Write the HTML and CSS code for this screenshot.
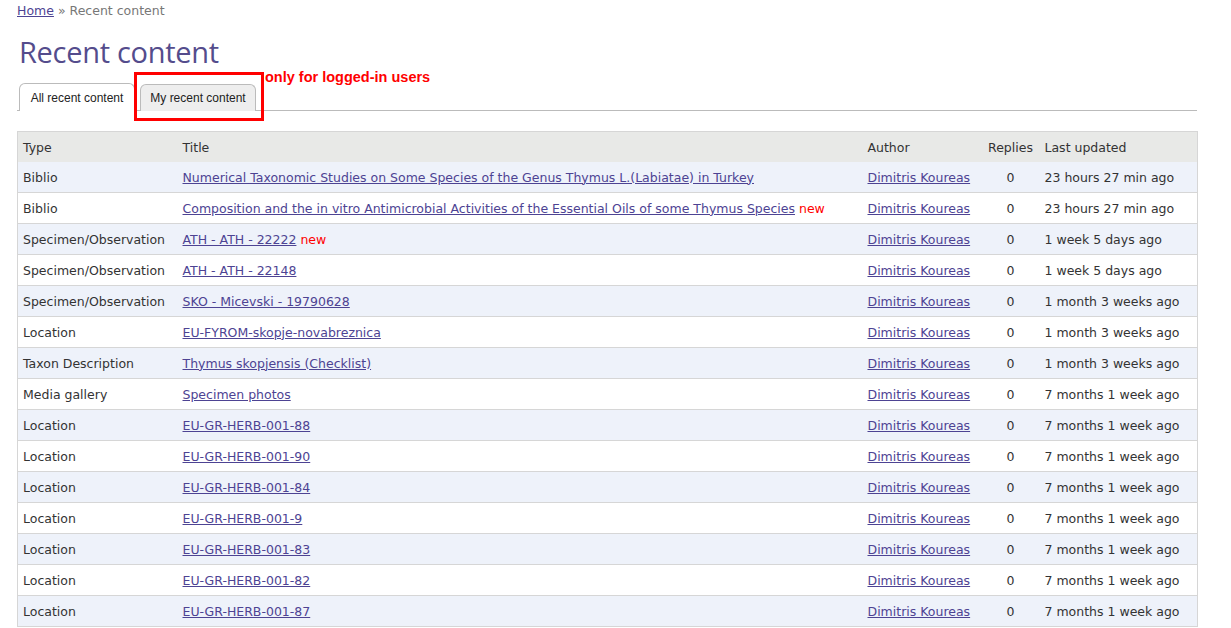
FILE: index.html
```html
<!DOCTYPE html>
<html>
<head>
<meta charset="utf-8">
<link rel="stylesheet" href="styles.css">
</head>
<body>
<div class="page">
  <div class="breadcrumb"><a href="#">Home</a> » Recent content</div>
  <h1 class="title">Recent content</h1>
  <div class="tabs-wrap">
    <ul class="tabs">
      <li class="tab active"><a href="#">All recent content</a></li>
      <li class="tab"><a href="#">My recent content</a></li>
    </ul>
    <div class="highlight"></div>
    <div class="note">only for logged-in users</div>
  </div>
  <table class="content">
    <colgroup>
      <col class="c-type"><col class="c-title"><col class="c-author"><col class="c-replies"><col class="c-updated">
    </colgroup>
    <thead>
      <tr><th>Type</th><th>Title</th><th>Author</th><th class="rep">Replies</th><th>Last updated</th></tr>
    </thead>
    <tbody>
      <tr class="odd"><td>Biblio</td><td><a href="#">Numerical Taxonomic Studies on Some Species of the Genus Thymus L.(Labiatae) in Turkey</a></td><td><a href="#">Dimitris Koureas</a></td><td class="rep">0</td><td>23 hours 27 min ago</td></tr>
      <tr><td>Biblio</td><td><a href="#">Composition and the in vitro Antimicrobial Activities of the Essential Oils of some Thymus Species</a> <span class="new">new</span></td><td><a href="#">Dimitris Koureas</a></td><td class="rep">0</td><td>23 hours 27 min ago</td></tr>
      <tr class="odd"><td>Specimen/Observation</td><td><a href="#">ATH - ATH - 22222</a> <span class="new">new</span></td><td><a href="#">Dimitris Koureas</a></td><td class="rep">0</td><td>1 week 5 days ago</td></tr>
      <tr><td>Specimen/Observation</td><td><a href="#">ATH - ATH - 22148</a></td><td><a href="#">Dimitris Koureas</a></td><td class="rep">0</td><td>1 week 5 days ago</td></tr>
      <tr class="odd"><td>Specimen/Observation</td><td><a href="#">SKO - Micevski - 19790628</a></td><td><a href="#">Dimitris Koureas</a></td><td class="rep">0</td><td>1 month 3 weeks ago</td></tr>
      <tr><td>Location</td><td><a href="#">EU-FYROM-skopje-novabreznica</a></td><td><a href="#">Dimitris Koureas</a></td><td class="rep">0</td><td>1 month 3 weeks ago</td></tr>
      <tr class="odd"><td>Taxon Description</td><td><a href="#">Thymus skopjensis (Checklist)</a></td><td><a href="#">Dimitris Koureas</a></td><td class="rep">0</td><td>1 month 3 weeks ago</td></tr>
      <tr><td>Media gallery</td><td><a href="#">Specimen photos</a></td><td><a href="#">Dimitris Koureas</a></td><td class="rep">0</td><td>7 months 1 week ago</td></tr>
      <tr class="odd"><td>Location</td><td><a href="#">EU-GR-HERB-001-88</a></td><td><a href="#">Dimitris Koureas</a></td><td class="rep">0</td><td>7 months 1 week ago</td></tr>
      <tr><td>Location</td><td><a href="#">EU-GR-HERB-001-90</a></td><td><a href="#">Dimitris Koureas</a></td><td class="rep">0</td><td>7 months 1 week ago</td></tr>
      <tr class="odd"><td>Location</td><td><a href="#">EU-GR-HERB-001-84</a></td><td><a href="#">Dimitris Koureas</a></td><td class="rep">0</td><td>7 months 1 week ago</td></tr>
      <tr><td>Location</td><td><a href="#">EU-GR-HERB-001-9</a></td><td><a href="#">Dimitris Koureas</a></td><td class="rep">0</td><td>7 months 1 week ago</td></tr>
      <tr class="odd"><td>Location</td><td><a href="#">EU-GR-HERB-001-83</a></td><td><a href="#">Dimitris Koureas</a></td><td class="rep">0</td><td>7 months 1 week ago</td></tr>
      <tr><td>Location</td><td><a href="#">EU-GR-HERB-001-82</a></td><td><a href="#">Dimitris Koureas</a></td><td class="rep">0</td><td>7 months 1 week ago</td></tr>
      <tr class="odd"><td>Location</td><td><a href="#">EU-GR-HERB-001-87</a></td><td><a href="#">Dimitris Koureas</a></td><td class="rep">0</td><td>7 months 1 week ago</td></tr>
    </tbody>
  </table>
</div>
</body>
</html>
```

FILE: styles.css
```css
html, body {
  margin: 0;
  padding: 0;
  background: #fff;
}
body {
  font-family: "DejaVu Sans", Verdana, sans-serif;
  font-size: 12.5px;
  color: #333;
}
a {
  color: #4d4393;
}
.page {
  padding: 3px 34px 0 17px;
}
.breadcrumb {
  color: #777;
  font-size: 12.5px;
  line-height: 16px;
}
.title {
  margin: 15px 0 0 2px;
  font-family: "Open Sans", sans-serif;
  font-weight: 400;
  font-size: 29px;
  line-height: 36px;
  color: #544c8c;
  letter-spacing: -0.3px;
}
.tabs-wrap {
  position: relative;
  margin-top: 13px;
  border-bottom: 1px solid #bbb;
  height: 27px;
}
.tabs {
  list-style: none;
  margin: 0;
  padding: 0 0 0 2px;
  display: flex;
  gap: 5px;
  height: 27px;
}
.tab {
  width: 114px;
  height: 26px;
  margin-top: 1px;
  border: 1px solid #bbb;
  border-bottom: none;
  border-radius: 6px 6px 0 0;
  background: #eee;
  display: flex;
  align-items: center;
  justify-content: center;
  font-family: "Liberation Sans", Arial, sans-serif;
  font-size: 12px;
}
.tab a {
  color: #222;
  text-decoration: none;
}
.tab.active {
  background: #fff;
  margin-top: 0;
  height: 27px;
}
.highlight {
  position: absolute;
  left: 117px;
  top: -11px;
  width: 124px;
  height: 43px;
  border: 3px solid #f00;
}
.note {
  position: absolute;
  left: 248px;
  top: -14px;
  color: #f00;
  font-family: "Liberation Sans", Arial, sans-serif;
  font-weight: bold;
  font-size: 14.5px;
}
.content {
  margin-top: 20px;
  width: 1180px;
  border-collapse: collapse;
  border: 1px solid #d6d6d6;
  table-layout: fixed;
}
.c-type { width: 160px; }
.c-title { width: 685px; }
.c-author { width: 119px; }
.c-replies { width: 58px; }
.c-updated { width: 158px; }
th, td {
  text-align: left;
  font-weight: normal;
  padding: 0 5px;
  height: 30px;
  border-bottom: 1px solid #d6d6d6;
  white-space: nowrap;
}
thead th {
  background: #e8e9e7;
  border-bottom: none;
}
.rep {
  text-align: center;
}
tr.odd td {
  background: #eef2fa;
}
.new {
  color: #f00;
}
```
